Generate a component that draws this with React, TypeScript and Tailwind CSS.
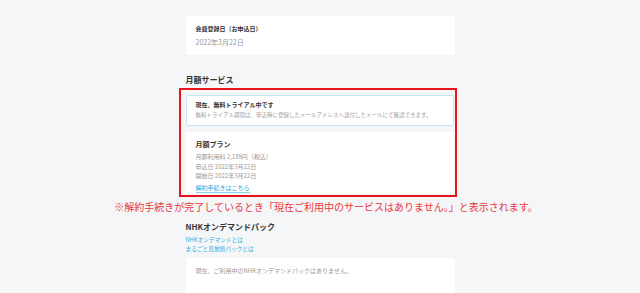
export default function App() {
  const jp = { fontFamily: '"Noto Sans CJK JP", "Noto Sans", sans-serif' };
  return (
    <main
      style={jp}
      className="h-[293px] w-[640px] overflow-hidden bg-[#f5f6f8] text-[#333]"
    >
      <div className="mx-auto w-[269px] pt-[16px]">
        <section className="h-[39px] rounded-[2px] bg-white px-[10px] pt-[8px]">
          <p className="h-[10px] text-[6px] font-bold leading-[10px]">会員登録日（お申込日）</p>
          <p className="mt-[3px] h-[10px] text-[7px] leading-[10px] text-[#999]">2022年3月22日</p>
        </section>

        <h2 className="mt-[19px] h-[12px] text-[8px] font-semibold leading-[12px]">月額サービス</h2>

        <div className="mt-[2px] ml-[-7px] mr-[-2px] h-[109px] border-2 border-[#e8141c] pl-[5px] pr-[1px] pt-[5px]">
          <div className="h-[31px] rounded-[2px] border border-[#c4e8ee] bg-white px-[9px] pt-[4px]">
            <p className="h-[10px] text-[6px] font-bold leading-[10px]">現在、無料トライアル中です</p>
            <p className="h-[10px] whitespace-nowrap text-[5.5px] leading-[10px] text-[#a0a0a0]">
              無料トライアル期間は、申込時に登録したメールアドレスへ送付したメールにて確認できます。
            </p>
          </div>
          <div className="mt-[6px] h-[61px] rounded-[2px] bg-white px-[10px] pt-[7px]">
            <p className="h-[10px] text-[7px] font-bold leading-[10px]">月額プラン</p>
            <p className="mt-[3px] h-[9.5px] text-[6px] leading-[9.5px] text-[#999]">月額利用料 2,189円（税込）</p>
            <p className="h-[9.5px] text-[6px] leading-[9.5px] text-[#999]">申込日 2022年3月22日</p>
            <p className="h-[9.5px] text-[6px] leading-[9.5px] text-[#999]">開始日 2022年3月22日</p>
            <a className="mt-[3px] block h-[9px] w-fit border-b border-[#8fd3ea] text-[6px] leading-[8px] text-[#1ea7d8]">
              解約手続きはこちら
            </a>
          </div>
        </div>
      </div>

      <p className="mt-[3px] h-[14px] whitespace-nowrap pl-[12px] text-center text-[10px] leading-[14px] text-[#e8383d]">
        ※解約手続きが完了しているとき「現在ご利用中のサービスはありません。」と表示されます。
      </p>

      <div className="mx-auto w-[269px]">
        <h2 className="mt-[7px] h-[12px] text-[8px] font-bold leading-[12px]">NHKオンデマンドパック</h2>
        <p className="mt-[2px] h-[9px] text-[5.7px] leading-[9px] text-[#2ab0de]">NHKオンデマンドとは</p>
        <p className="h-[9px] text-[5.7px] leading-[9px] text-[#2ab0de]">まるごと見放題パックとは</p>
        <section className="mt-[5px] h-[60px] rounded-[3px] bg-white px-[10px] pt-[8px]">
          <p className="h-[10px] text-[6px] leading-[10px] text-[#999]">
            現在、ご利用中のNHKオンデマンドパックはありません。
          </p>
        </section>
      </div>
    </main>
  );
}
